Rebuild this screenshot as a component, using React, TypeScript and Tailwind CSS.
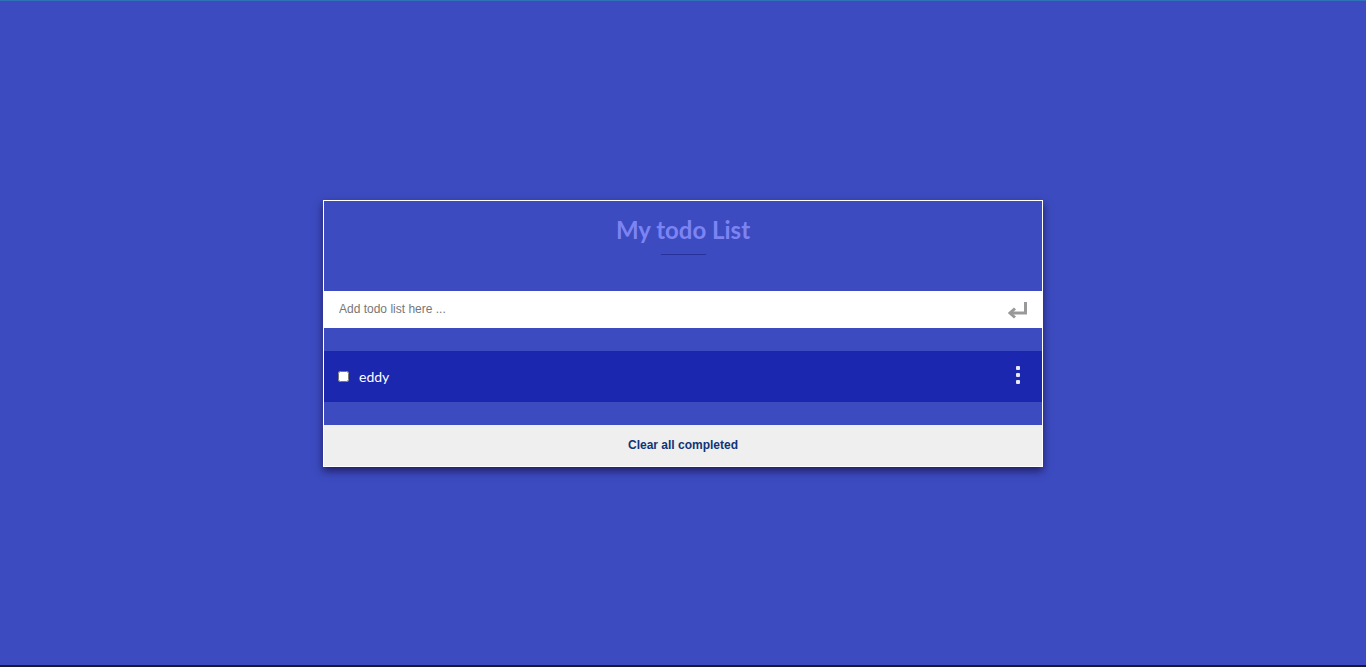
import React from "react";

export default function App() {
  return (
    <div className="w-[1366px] h-[667px] bg-[#3c4bbf] flex flex-col overflow-hidden" style={{ fontFamily: "Lato, 'Liberation Sans', sans-serif" }}>
      <div className="h-px bg-[#2f72b8]" />
      <div className="flex-1 flex items-start justify-center pt-[199px]">
        <div className="w-[720px] border border-white shadow-[0_4px_8px_rgba(20,10,60,0.7)] flex flex-col">
          <div className="h-[90px] bg-[#3c4bbf] flex flex-col items-center pt-[14px]">
            <h1 className="text-[24px] leading-[30px] font-bold text-[#7c84f4]" style={{ fontFamily: "Lato, sans-serif" }}>My todo List</h1>
            <div className="w-[45px] h-px bg-[#27339a] mt-[9px]" />
          </div>
          <div className="h-[37px] bg-white flex items-center pl-[15px] pr-[13px]">
            <input
              className="flex-1 outline-none text-[12px] text-[#555] placeholder:text-[#777] bg-transparent mb-[2px]"
              style={{ fontFamily: "'Liberation Sans', Arial, sans-serif" }}
              placeholder="Add todo list here ..."
            />
            <svg width="21" height="18" viewBox="0 0 21 18" className="mt-[1px]">
              <path d="M17.5 1 V12 H4" fill="none" stroke="#999" strokeWidth="3" />
              <path d="M7 7.5 L2 12 L7 16.5" fill="none" stroke="#999" strokeWidth="3" />
            </svg>
          </div>
          <div className="h-[23px] bg-[#3c4bbf]" />
          <div className="h-[51px] bg-[#1a27ae] flex items-center pl-[14px] pr-[22px]">
            <input type="checkbox" className="w-[11px] h-[11px] m-0 mt-[-1px]" />
            <span className="ml-[10px] text-[14px] text-white" style={{ fontFamily: "Lato, sans-serif" }}>eddy</span>
            <div className="ml-auto flex flex-col gap-[3px] mt-[-3px]">
              <div className="w-[4px] h-[4px] bg-[#e8e8f4] rounded-[1px]" />
              <div className="w-[4px] h-[4px] bg-[#e8e8f4] rounded-[1px]" />
              <div className="w-[4px] h-[4px] bg-[#e8e8f4] rounded-[1px]" />
            </div>
          </div>
          <div className="h-[23px] bg-[#3c4bbf]" />
          <div className="h-[41px] bg-[#efefef] flex items-center justify-center pb-[2px]">
            <span className="text-[12px] font-bold text-[#0f3478]" style={{ fontFamily: "'Liberation Sans', Arial, sans-serif" }}>Clear all completed</span>
          </div>
        </div>
      </div>
      <div className="h-[2px] bg-[#1a1a2e]" />
    </div>
  );
}
